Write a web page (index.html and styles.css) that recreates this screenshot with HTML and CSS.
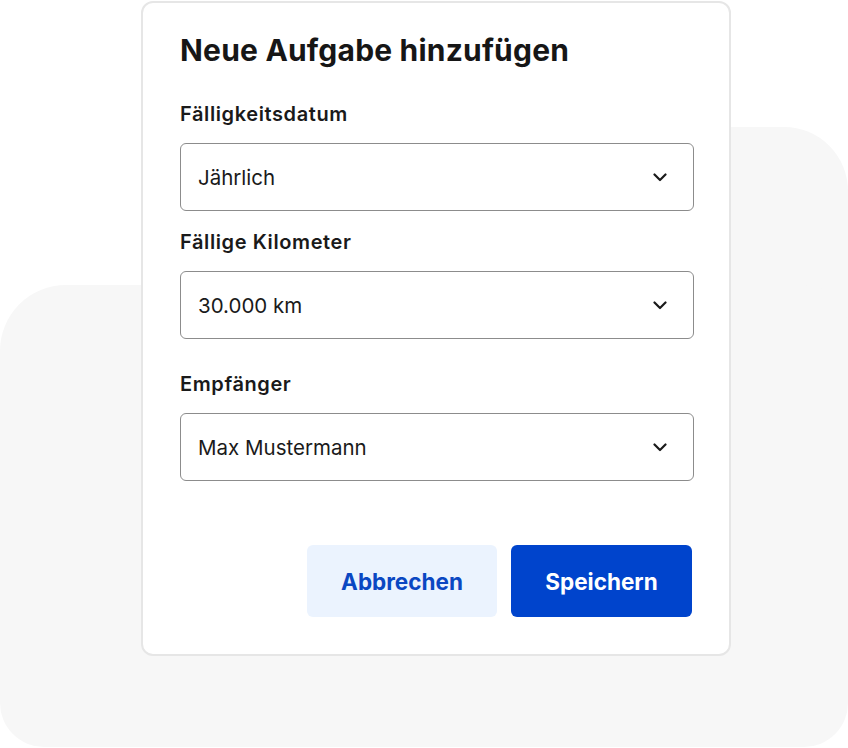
FILE: index.html
```html
<!DOCTYPE html>
<html lang="de">
<head>
<meta charset="utf-8">
<link rel="stylesheet" href="styles.css">
</head>
<body>
<div class="stage">
  <div class="blob blob-top"></div>
  <div class="blob blob-bottom"></div>
  <div class="card">
    <h1 class="title">Neue Aufgabe hinzufügen</h1>
    <div class="field">
      <div class="label">Fälligkeitsdatum</div>
      <div class="select"><span>Jährlich</span><svg class="chev" width="14" height="9" viewBox="0 0 14 9"><polyline points="1.5,1.5 7,7 12.5,1.5" fill="none" stroke="#1a1a1a" stroke-width="2.2" stroke-linecap="round" stroke-linejoin="round"/></svg></div>
    </div>
    <div class="field">
      <div class="label">Fällige Kilometer</div>
      <div class="select"><span>30.000 km</span><svg class="chev" width="14" height="9" viewBox="0 0 14 9"><polyline points="1.5,1.5 7,7 12.5,1.5" fill="none" stroke="#1a1a1a" stroke-width="2.2" stroke-linecap="round" stroke-linejoin="round"/></svg></div>
    </div>
    <div class="field field-wide">
      <div class="label">Empfänger</div>
      <div class="select"><span>Max Mustermann</span><svg class="chev" width="14" height="9" viewBox="0 0 14 9"><polyline points="1.5,1.5 7,7 12.5,1.5" fill="none" stroke="#1a1a1a" stroke-width="2.2" stroke-linecap="round" stroke-linejoin="round"/></svg></div>
    </div>
    <div class="actions">
      <button class="btn btn-secondary">Abbrechen</button>
      <button class="btn btn-primary">Speichern</button>
    </div>
  </div>
</div>
</body>
</html>
```
FILE: styles.css
```css
* { box-sizing: border-box; }
html, body { margin: 0; padding: 0; background: #ffffff; }
body { font-family: Inter, "Noto Sans", "Liberation Sans", sans-serif; color: #1a1a1a; }

.stage {
  width: 848px;
  height: 748px;
  display: grid;
  grid-template: 748px / 848px;
  overflow: hidden;
}
.stage > * { grid-area: 1 / 1; }

.blob { background: #f7f7f7; }
.blob-top {
  margin: 127px 0 0 600px;
  height: 300px;
  border-radius: 0 64px 0 0;
}
.blob-bottom {
  margin-top: 285px;
  height: 462px;
  border-radius: 66px 44px 44px 44px;
}

.card {
  justify-self: start;
  align-self: start;
  margin: 1px 0 0 141px;
  width: 590px;
  height: 655px;
  background: #fff;
  border: 2px solid #e6e6e6;
  border-radius: 12px;
  padding: 29px 35px 37px 37px;
  display: flex;
  flex-direction: column;
}

.title {
  margin: 0 0 34px;
  font-size: 30px;
  line-height: 36px;
  font-weight: 700;
  letter-spacing: 0.2px;
  color: #161616;
}

.field { display: flex; flex-direction: column; gap: 17px; margin-bottom: 19px; }
.field-wide { margin-top: 14px; }

.label {
  font-size: 20px;
  line-height: 24px;
  font-weight: 600;
  letter-spacing: 0.6px;
  color: #1a1a1a;
}

.select {
  height: 68px;
  border: 1.5px solid #8c8c8c;
  border-radius: 6px;
  padding: 0 26px 0 17px;
  display: flex;
  align-items: center;
  justify-content: space-between;
  font-size: 20.5px;
  color: #1a1a1a;
}
.chev { display: block; }

.actions {
  margin-top: auto;
  display: flex;
  justify-content: flex-end;
  gap: 14px;
  padding-right: 2px;
}
.btn {
  height: 72px;
  border: none;
  border-radius: 6px;
  font-family: inherit;
  font-size: 22.5px;
  font-weight: 700;
  cursor: pointer;
}
.btn-secondary { width: 190px; background: #ebf3fe; color: #0a47c2; }
.btn-primary { width: 181px; background: #0044cc; color: #ffffff; }
```
